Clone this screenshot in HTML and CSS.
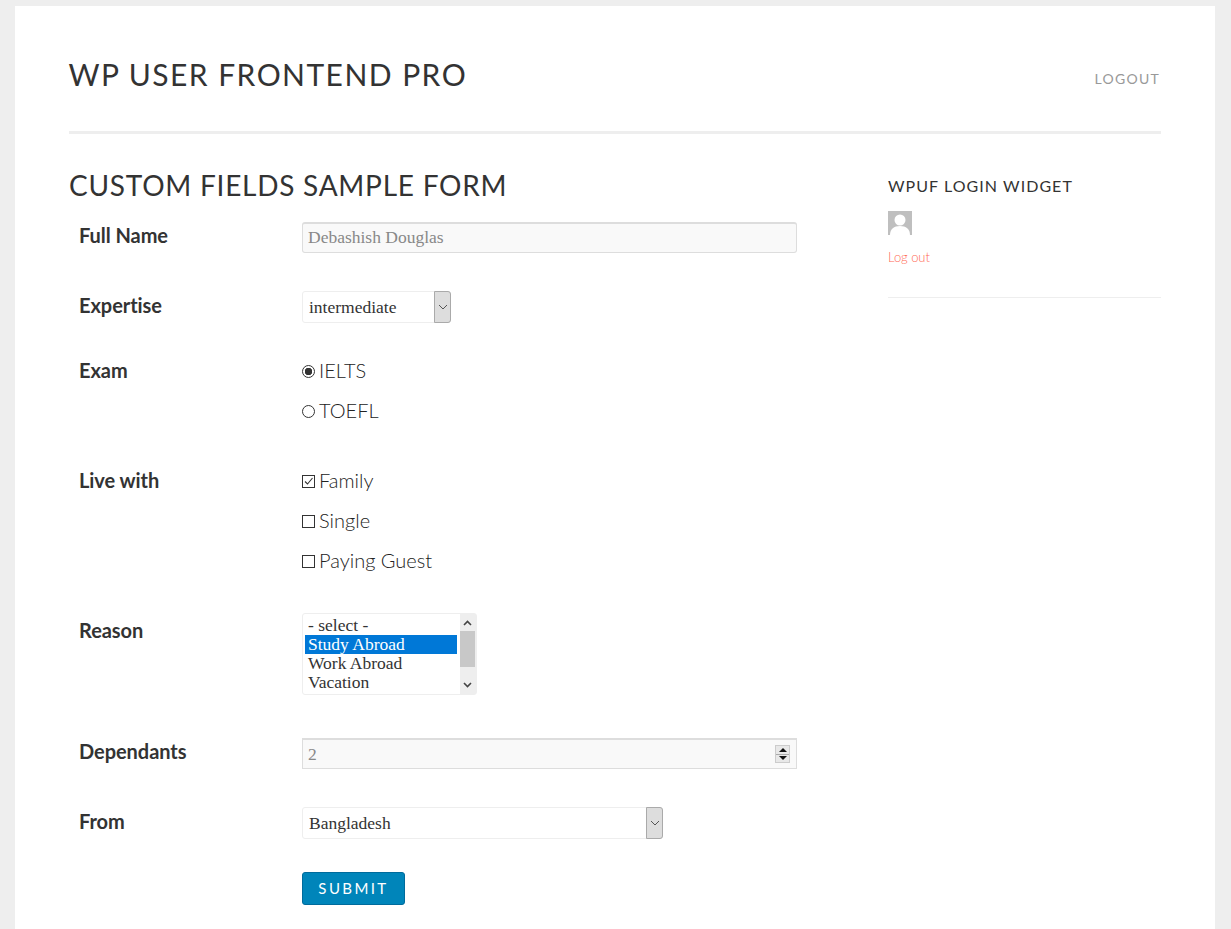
FILE: index.html

```html
<!DOCTYPE html>
<html lang="en">
<head>
  <meta charset="UTF-8" />
  <title>Custom Fields Sample Form</title>
  <link rel="stylesheet" href="styles.css">
</head>
<body>
  <div class="page">
    <header class="site-header">
      <h1>WP User Frontend Pro</h1>
      <a class="logout-link" href="#">Logout</a>
    </header>

    <div class="columns">
      <main class="content">
        <h2>Custom Fields Sample Form</h2>
        <form>
          <div class="row row-name">
            <label>Full Name</label>
            <input class="text-input" type="text" value="Debashish Douglas" readonly />
          </div>

          <div class="row row-expertise">
            <label>Expertise</label>
            <div class="select select-small">
              <span>intermediate</span>
              <span class="select-arrow"><svg width="10" height="6" viewBox="0 0 10 6"><path d="M1 1l4 4 4-4" fill="none" stroke="#555" stroke-width="1"/></svg></span>
            </div>
          </div>

          <div class="row row-exam">
            <label>Exam</label>
            <div class="options">
              <div class="option"><span class="radio checked"></span>IELTS</div>
              <div class="option"><span class="radio"></span>TOEFL</div>
            </div>
          </div>

          <div class="row row-live">
            <label>Live with</label>
            <div class="options">
              <div class="option"><span class="check"><svg width="11" height="11" viewBox="0 0 11 11"><path d="M2 5.5l2.5 2.5 5-6" fill="none" stroke="#333" stroke-width="1.1"/></svg></span>Family</div>
              <div class="option"><span class="check"></span>Single</div>
              <div class="option"><span class="check"></span>Paying Guest</div>
            </div>
          </div>

          <div class="row row-reason">
            <label>Reason</label>
            <div class="listbox">
              <ul>
                <li>- select -</li>
                <li class="selected">Study Abroad</li>
                <li>Work Abroad</li>
                <li>Vacation</li>
              </ul>
              <div class="scrollbar">
                <svg width="9" height="6" viewBox="0 0 9 6"><path d="M1 5l3.5-3.5L8 5" fill="none" stroke="#444" stroke-width="1.6"/></svg>
                <span class="scroll-thumb"></span>
                <svg width="9" height="6" viewBox="0 0 9 6"><path d="M1 1l3.5 3.5L8 1" fill="none" stroke="#444" stroke-width="1.6"/></svg>
              </div>
            </div>
          </div>

          <div class="row row-dependants">
            <label>Dependants</label>
            <div class="number-input">
              <span>2</span>
              <span class="spinner">
                <span class="spin-up"></span>
                <span class="spin-down"></span>
              </span>
            </div>
          </div>

          <div class="row row-from">
            <label>From</label>
            <div class="select select-wide">
              <span>Bangladesh</span>
              <span class="select-arrow"><svg width="10" height="6" viewBox="0 0 10 6"><path d="M1 1l4 4 4-4" fill="none" stroke="#555" stroke-width="1"/></svg></span>
            </div>
          </div>

          <div class="row">
            <label></label>
            <button class="submit-btn" type="button">Submit</button>
          </div>
        </form>
      </main>

      <aside class="sidebar">
        <h3>WPUF Login Widget</h3>
        <div class="avatar">
          <svg width="24" height="24" viewBox="0 0 24 24"><circle cx="12" cy="9" r="5.5" fill="#fff"/><path d="M2 24c0-6 4-9 10-9s10 3 10 9z" fill="#fff"/></svg>
        </div>
        <a class="widget-link" href="#">Log out</a>
      </aside>
    </div>
  </div>
</body>
</html>
```

FILE: styles.css

```css
body {
  margin: 0;
  padding-top: 6px;
  background: #eeeeee;
  font-family: Lato, sans-serif;
  color: #333;
}
.page {
  box-sizing: border-box;
  width: 1200px;
  height: 923px;
  margin-left: 15px;
  padding: 0 54px;
  background: #fff;
  overflow: hidden;
}
.site-header {
  display: flex;
  justify-content: space-between;
  height: 125px;
  border-bottom: 3px solid #eeeeee;
}
h1 {
  margin: 50px 0 0 -0.5px;
  font-size: 30px;
  line-height: 36px;
  font-weight: 400;
  letter-spacing: 1.45px;
  text-transform: uppercase;
}
.logout-link {
  margin: 64px 1px 0 0;
  font-size: 14px;
  line-height: 18px;
  letter-spacing: 1.25px;
  color: #999;
  text-decoration: none;
  text-transform: uppercase;
}
.columns {
  display: flex;
  justify-content: space-between;
}
.content {
  width: 728px;
}
h2 {
  margin: 34px 0 20px;
  font-size: 28px;
  line-height: 34px;
  font-weight: 400;
  letter-spacing: 0.75px;
  text-transform: uppercase;
}
.row {
  display: flex;
  align-items: flex-start;
}
.row label {
  flex: none;
  width: 233px;
  padding-left: 10px;
  box-sizing: border-box;
  font-size: 20px;
  line-height: 28px;
  font-weight: 700;
  letter-spacing: -0.05px;
}
.row-name { margin-bottom: 38px; }
.row-expertise { margin-bottom: 28px; }
.row-exam { margin-bottom: 30px; }
.row-live { margin-bottom: 32px; }
.row-reason { margin-bottom: 43px; }
.row-dependants { margin-bottom: 38px; }
.row-from { margin-bottom: 33px; }
.row-name label { margin-top: -1px; }
.row-exam label { margin-top: 5px; }
.row-live label { margin-top: 5px; }
.row-reason label { margin-top: 3px; }
.row-dependants label { margin-top: -1px; }
.text-input {
  box-sizing: border-box;
  width: 495px;
  height: 31px;
  margin: 0;
  padding: 0 5px 2px;
  border: 1px solid #ddd;
  border-top: 2px solid #ddd;
  border-radius: 3px;
  background: #f9f9f9;
  font-family: "Liberation Serif", serif;
  font-size: 17.5px;
  color: #888;
  outline: none;
}
.select {
  display: flex;
  justify-content: space-between;
  box-sizing: border-box;
  height: 32px;
  padding-left: 6px;
  border: 1px solid #eee;
  border-radius: 3px;
  background: #fff;
  font-family: "Liberation Serif", serif;
  font-size: 17.5px;
  line-height: 31px;
  color: #333;
}
.select-small { width: 149px; }
.select-wide { width: 361px; }
.select-arrow {
  display: flex;
  align-items: center;
  justify-content: center;
  box-sizing: border-box;
  width: 17px;
  height: 32px;
  margin: -1px -1px 0 0;
  border: 1px solid #aaa;
  border-radius: 0 3px 3px 0;
  background: #dddddd;
}
.options {
  display: flex;
  flex-direction: column;
}
.option {
  display: flex;
  align-items: center;
  box-sizing: border-box;
  height: 40px;
  padding-bottom: 2px;
  font-size: 20px;
  font-weight: 300;
  color: #222;
}
.radio {
  box-sizing: border-box;
  width: 13px;
  height: 13px;
  margin: 2px 4px 0 0;
  border: 1px solid #333;
  border-radius: 50%;
  background: #fff;
}
.radio.checked {
  background: radial-gradient(circle, #333 0 3.5px, #fff 4px);
}
.check {
  display: flex;
  box-sizing: border-box;
  width: 13px;
  height: 13px;
  margin: 2px 4px 0 0;
  border: 1px solid #333;
  background: #fff;
}
.listbox {
  display: flex;
  box-sizing: border-box;
  width: 175px;
  height: 82px;
  border: 1px solid #eee;
  border-radius: 3px;
  background: #fff;
}
.listbox ul {
  flex: 1;
  margin: 0;
  padding: 2px 2px 0;
  list-style: none;
  font-family: "Liberation Serif", serif;
  font-size: 17.5px;
  line-height: 19px;
}
.listbox li {
  padding-left: 3px;
  margin-right: 1px;
}
.listbox li.selected {
  background: #0078d7;
  color: #fff;
}
.scrollbar {
  display: flex;
  flex-direction: column;
  align-items: center;
  justify-content: space-between;
  flex: none;
  width: 16px;
  padding: 6px 1px 6px 0;
  box-sizing: border-box;
  background: #eeeeee;
}
.scroll-thumb {
  width: 15px;
  height: 36px;
  margin: -1px 0 10px;
  background: #c8c8c8;
  flex: none;
}
.number-input {
  display: flex;
  justify-content: space-between;
  align-items: center;
  box-sizing: border-box;
  width: 495px;
  height: 31px;
  padding: 0 6px 0 5px;
  border: 1px solid #ddd;
  border-top: 2px solid #ddd;
  background: #f9f9f9;
  font-family: "Liberation Serif", serif;
  font-size: 17.5px;
  color: #888;
}
.spinner {
  display: flex;
  flex-direction: column;
  box-sizing: border-box;
  width: 15px;
  height: 18px;
  border: 1px solid #ccc;
  background: #e8e8e8;
}
.spin-up, .spin-down {
  flex: 1;
  display: flex;
  align-items: center;
  justify-content: center;
}
.spin-up { border-bottom: 1px solid #aaa; }
.spin-up::before {
  content: "";
  border: 4px solid transparent;
  border-top: 0;
  border-bottom: 4px solid #111;
}
.spin-down::before {
  content: "";
  border: 4px solid transparent;
  border-bottom: 0;
  border-top: 4px solid #111;
}
.submit-btn {
  box-sizing: border-box;
  width: 103px;
  height: 33px;
  padding: 0 0 2px;
  border: 1px solid #006b9c;
  border-radius: 3px;
  background: #0085ba;
  color: #fff;
  font-family: Lato, sans-serif;
  font-size: 15px;
  letter-spacing: 2.4px;
  text-transform: uppercase;
}
.sidebar {
  width: 273px;
  height: 163px;
  border-bottom: 1px solid #eee;
}
h3 {
  margin: 42px 0 15px;
  font-size: 16px;
  line-height: 20px;
  font-weight: 400;
  letter-spacing: 1.05px;
  text-transform: uppercase;
}
.avatar {
  width: 24px;
  height: 24px;
  background: #bfbfbf;
  overflow: hidden;
}
.avatar svg {
  display: block;
}
.widget-link {
  display: block;
  margin-top: 13px;
  font-size: 13px;
  line-height: 18px;
  font-weight: 300;
  letter-spacing: -0.05px;
  color: #ff6a55;
  text-decoration: none;
}
```
